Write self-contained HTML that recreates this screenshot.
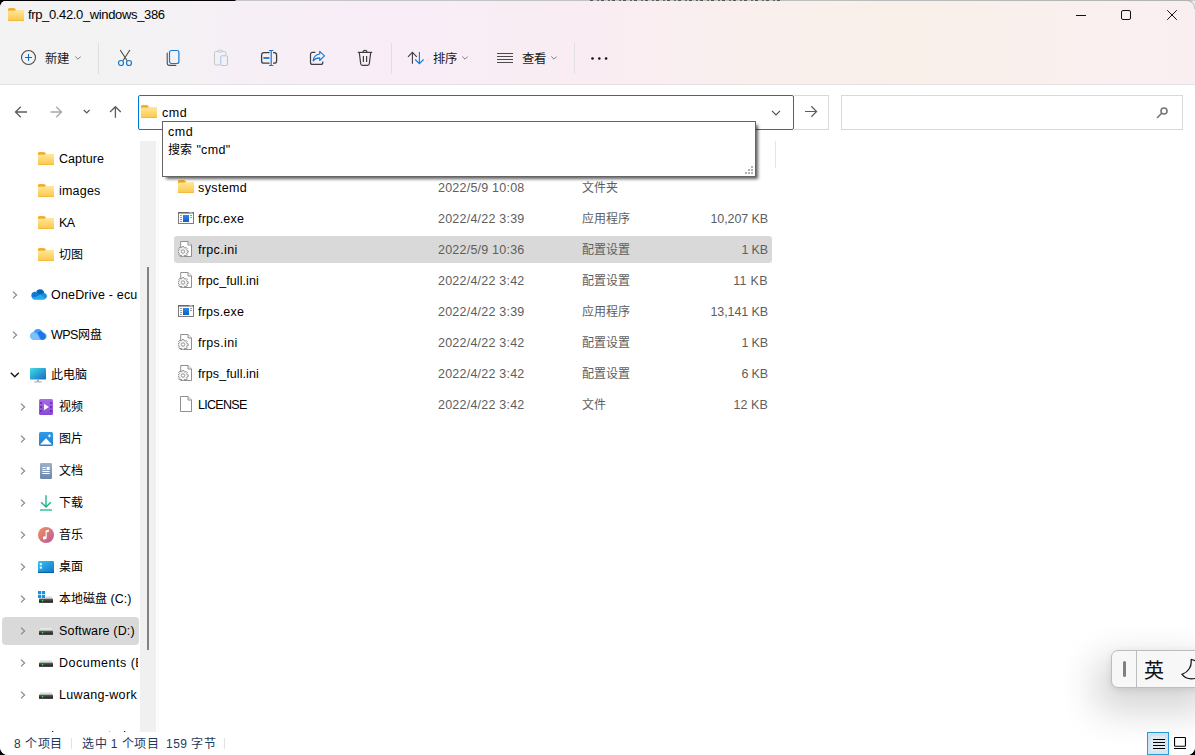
<!DOCTYPE html>
<html lang="zh-CN">
<head>
<meta charset="utf-8">
<title>frp_0.42.0_windows_386</title>
<style>
html,body{margin:0;padding:0;}
body{width:1195px;height:755px;overflow:hidden;background:#000;position:relative;
  font-family:"Liberation Sans",sans-serif;font-size:12.5px;color:#000;}
.abs,.t,svg{position:absolute;}
.t{white-space:nowrap;line-height:16px;height:16px;}
svg{overflow:visible;}
#topline{z-index:5;left:0;top:0;width:1195px;height:1px;background:linear-gradient(90deg,#000 0,#000 235px,#c6c6c6 236px,#bdbdbd 840px,#b2b2b2 1188px,#d8d8d8 1195px);}
#win{left:0;top:0;width:1195px;height:755px;background:#fff;border-radius:8px 8px 8px 8px;overflow:hidden;}
#chrome{left:0;top:0;width:1195px;height:84px;border-bottom:1px solid #e3e1e4;
  background:linear-gradient(90deg,#f3f3f3 0,#f4f2f4 150px,#f7eef6 300px,#f9edf6 450px,#f9edf3 600px,#f9efed 750px,#f9f0ea 900px,#f9f0ee 1050px,#f9eff2 1195px);}
.vsep{width:1px;background:#e2dfe3;}
#title{left:28px;top:7px;font-size:13px;letter-spacing:-.36px;}
.tb{font-size:12.400px;top:51px;color:#1a1a1a;margin-left:.5px;}
#addr{left:138px;top:95px;width:654px;height:33px;border:1px solid #0078d4;border-radius:2px;background:#fff;}
#go{left:794px;top:95px;width:34px;height:33px;border:1px solid #d9d9d9;border-left:none;background:#fff;}
#search{left:841px;top:95px;width:340px;height:33px;border:1px solid #d9d9d9;background:#fff;}
#drop{left:162px;top:121px;width:592px;height:54px;border:1px solid #646464;background:#fff;
  box-shadow:3px 3px 3px -1px rgba(0,0,0,.62);}
#track{left:140px;top:141px;width:16px;height:591px;background:#f0f0f0;}
#thumb{left:147px;top:267px;width:2px;height:383px;background:#828282;}
.sel{background:#d9d9d9;border-radius:3px;}
.nm{left:198px;color:#000;}
.dt{left:438px;color:#5e5e5e;}
.ty{left:582px;color:#5e5e5e;font-size:12px;}
.sz{right:427px;color:#5e5e5e;text-align:right;}
.sb{left:59px;color:#000;}
.sb2{left:51px;color:#000;}
.cj{font-size:12px;}
.st{top:736px;color:#1e395b;font-size:12px;letter-spacing:.5px;}
</style>
</head>
<body>
<svg width="0" height="0" style="position:absolute;left:-10px;top:-10px">
  <defs>
    <linearGradient id="fg" x1="0" y1="0" x2="0" y2="1"><stop offset="0" stop-color="#ffe79d"/><stop offset="1" stop-color="#fac846"/></linearGradient>
    <linearGradient id="pcg" x1="0" y1="0" x2="1" y2="1"><stop offset="0" stop-color="#3fdde6"/><stop offset="1" stop-color="#1769c4"/></linearGradient>
    <linearGradient id="vidg" x1="0" y1="0" x2="0" y2="1"><stop offset="0" stop-color="#a86bea"/><stop offset="1" stop-color="#8a47d6"/></linearGradient>
    <linearGradient id="picg" x1="0" y1="0" x2="0" y2="1"><stop offset="0" stop-color="#2f9be8"/><stop offset="1" stop-color="#1f7fd6"/></linearGradient>
    <linearGradient id="docg" x1="0" y1="0" x2="0" y2="1"><stop offset="0" stop-color="#9db0cb"/><stop offset="1" stop-color="#6d86ab"/></linearGradient>
    <linearGradient id="musg" x1="0" y1="0" x2="1" y2="1"><stop offset="0" stop-color="#f5925a"/><stop offset="1" stop-color="#b8579f"/></linearGradient>
    <linearGradient id="dskg" x1="0" y1="0" x2="1" y2="1"><stop offset="0" stop-color="#35c6f2"/><stop offset="1" stop-color="#1274c6"/></linearGradient>
    <linearGradient id="drtg" x1="0" y1="0" x2="0" y2="1"><stop offset="0" stop-color="#f0f0f0"/><stop offset="1" stop-color="#c9c9c9"/></linearGradient>
    <linearGradient id="drvg" x1="0" y1="0" x2="0" y2="1"><stop offset="0" stop-color="#5e5e5e"/><stop offset=".7" stop-color="#2b2b2b"/><stop offset="1" stop-color="#555"/></linearGradient>
    <linearGradient id="exeg" x1="0" y1="0" x2="0" y2="1"><stop offset="0" stop-color="#2a8be6"/><stop offset="1" stop-color="#0d5fc2"/></linearGradient>
    <symbol id="folder" viewBox="0 0 16 13">
      <path d="M0 1.6C0 .7.7 0 1.6 0h4.1c.5 0 .9.2 1.2.5L8.3 2h6.2c.8 0 1.5.7 1.5 1.5v8c0 .8-.7 1.5-1.5 1.5h-13C.7 13 0 12.300 0 11.500z" fill="#f2ae2c"/>
      <path d="M0 4.100C0 3.100.600 2.800 1.300 2.800l4.800-.1c.5 0 .8-.1 1.200-.400L7.800 2h6.900c.7 0 1.300.600 1.300 1.300v8.200c0 .8-.7 1.500-1.500 1.500h-13C.7 13 0 12.300 0 11.500z" fill="url(#fg)"/>
      <path d="M0 11.500c0 .8.700 1.500 1.500 1.500h13c.8 0 1.500-.7 1.500-1.500v-.6c0 .8-.7 1.500-1.500 1.500h-13c-.8 0-1.500-.7-1.500-1.500z" fill="#eaa935"/>
    </symbol>
    <symbol id="chev" viewBox="0 0 6 4"><path d="M.3.500 3 3.200 5.700.5" fill="none" stroke="#7a7a7a" stroke-width="1"/></symbol>
    <symbol id="rchev" viewBox="0 0 6 8"><path d="M1 .6 4.600 4 1 7.400" fill="none" stroke="#8c8c8c" stroke-width="1.300"/></symbol>
    <symbol id="ini" viewBox="0 0 14 16">
      <path d="M2.700.500h7.300l3.500 3.500v11.500H2.700z" fill="#fff" stroke="#8f8f8f" stroke-width="1"/>
      <path d="M10 .5v3.500h3.500" fill="#f3f3f3" stroke="#8f8f8f" stroke-width="1"/>
      <g transform="translate(5 10.500)">
        <path d="M-.8-5h1.600l.3 1.200 1 .4 1.100-.7 1.100 1.100-.7 1.100.4 1 1.200.3v1.600l-1.200.3-.4 1 .7 1.100-1.100 1.100-1.100-.7-1 .4-.3 1.200H-.8l-.3-1.200-1-.4-1.100.7-1.100-1.100.7-1.100-.4-1L-5.200.800V-.8l1.200-.3.400-1-.7-1.100 1.100-1.100 1.100.7 1-.4z" fill="#f4f4f4" stroke="#8a8a8a" stroke-width=".9"/>
        <circle r="1.700" fill="#fff" stroke="#8a8a8a" stroke-width=".9"/>
      </g>
    </symbol>
    <symbol id="exe" viewBox="0 0 16 12">
      <rect x=".5" y=".5" width="15" height="11" fill="#fff" stroke="#7d7d7d" stroke-width="1"/>
      <rect x="0" y="0" width="16" height="1.600" fill="#6a6a6a"/>
      <rect x="5" y="3" width="6" height="7" fill="url(#exeg)"/>
      <path d="M2 3.500h2M2 5.500h2M2 7.500h2M2 9.500h2M12 3.500h2M12 5.500h2" stroke="#9a9a9a" stroke-width="1"/>
      <rect x="11.500" y=".3" width="1" height="1" fill="#fff"/><rect x="13.300" y=".3" width="1" height="1" fill="#fff"/>
    </symbol>
    <symbol id="drive" viewBox="0 0 14 7">
      <path d="M1.500 0h11L14 3H0z" fill="url(#drtg)"/>
      <rect x="0" y="2.800" width="14" height="4.200" rx=".5" fill="url(#drvg)"/>
      <rect x="2.900" y="4.100" width="1.300" height="1.300" fill="#3fe860"/>
    </symbol>
  </defs>
</svg>
<div class="abs" style="right:0;top:0;width:10px;height:10px;background:#ececec"></div>
<div class="abs" style="z-index:6;right:0;top:0;width:9px;height:8px;border-top:1px solid #b4b4b4;border-right:1px solid #c4c4c4;border-top-right-radius:8px"></div>
<div id="topline" class="abs"></div>
<div class="abs" style="z-index:6;left:590px;top:0;width:192px;height:1px;background:repeating-linear-gradient(90deg,#555 0,#555 3px,#c0c0c0 3px,#c0c0c0 7px,#666 7px,#666 9px,#c0c0c0 9px,#c0c0c0 11px)"></div>
<div id="win" class="abs">
  <div id="chrome" class="abs"></div>

  <!-- title -->
  <div id="title" class="t">frp_0.42.0_windows_386</div>


  <!-- title icon + window controls -->
  <svg style="left:8px;top:8px" width="16" height="13"><use href="#folder"/></svg>
  <svg style="left:1076px;top:10px" width="102" height="11" viewBox="0 0 102 11" fill="none" stroke="#111" stroke-width="1">
    <path d="M0 5.500h10"/>
    <rect x="45.500" y=".5" width="9" height="9" rx="1.500"/>
    <path d="M91.200.2l9.600 9.600M100.800.2l-9.600 9.600"/>
  </svg>

  <!-- toolbar icons -->
  <svg style="left:20px;top:49px" width="62" height="18" viewBox="0 0 62 18" fill="none">
    <circle cx="8.500" cy="8.500" r="7" stroke="#4a4a4a" stroke-width="1.100"/>
    <path d="M5 8.500h7M8.500 5v7" stroke="#0f6cbd" stroke-width="1.100"/>
  </svg>
  <svg style="left:75px;top:56px" width="6" height="4"><use href="#chev"/></svg>
  <!-- cut -->
  <svg style="left:117px;top:49px" width="17" height="18" viewBox="0 0 17 18" fill="none">
    <path d="M3.200 1l7 10.800M12.900 1l-7 10.800" stroke="#4a4a4a" stroke-width="1.100"/>
    <circle cx="4" cy="14" r="2.500" stroke="#0f7bd8" stroke-width="1.200"/>
    <circle cx="12" cy="14" r="2.500" stroke="#0f7bd8" stroke-width="1.200"/>
  </svg>
  <!-- copy -->
  <svg style="left:166px;top:49px" width="14" height="18" viewBox="0 0 14 18" fill="none">
    <path d="M1.200 3.700v10.200c0 1.400 1.100 2.500 2.500 2.500h6.600" stroke="#4a4a4a" stroke-width="1.100"/>
    <rect x="3.500" y="1.500" width="9.400" height="13" rx="2" stroke="#0f7bd8" stroke-width="1.200"/>
  </svg>
  <!-- paste (disabled) -->
  <svg style="left:213px;top:49px" width="16" height="18" viewBox="0 0 16 18" fill="none">
    <path d="M7 16H2.700c-.7 0-1.200-.5-1.200-1.200V3.700c0-.7.5-1.200 1.200-1.200h9c.7 0 1.200.5 1.200 1.200V6" stroke="#c6c6c6" stroke-width="1"/>
    <ellipse cx="7.200" cy="2.200" rx="2.600" ry="1.100" stroke="#c6c6c6" stroke-width="1" fill="#f6eff6"/>
    <rect x="7.700" y="6.700" width="6.800" height="9.800" rx="1.500" stroke="#a2cbf0" stroke-width="1.100"/>
  </svg>
  <!-- rename -->
  <svg style="left:260px;top:49px" width="18" height="18" viewBox="0 0 18 18" fill="none">
    <path d="M9.600 3.600H3.900c-1.300 0-2.300 1-2.300 2.300v6c0 1.300 1 2.300 2.300 2.300h5.700M13 3.600h1.300c1.300 0 2.300 1 2.300 2.300v6c0 1.300-1 2.300-2.300 2.300H13" stroke="#3f3f3f" stroke-width="1.300"/>
    <path d="M3.400 9h6" stroke="#0f6cd0" stroke-width="1.700"/>
    <path d="M9 1.500h4.400M9 16.500h4.400M11.200 1.500v15" stroke="#0f7bd8" stroke-width="1.200"/>
  </svg>
  <!-- share -->
  <svg style="left:309px;top:50px" width="17" height="16" viewBox="0 0 17 16" fill="none">
    <path d="M6.400 2.400H3.500c-1.100 0-2 .9-2 2v8c0 1.100.9 2 2 2h8.300c1.100 0 2-.9 2-2v-1" stroke="#3f3f3f" stroke-width="1.200"/>
    <path d="M10.700 1.300l4.800 4.600-4.800 4.600V7.900c-3 0-5 .9-6.600 2.900.5-3.900 2.900-6.300 6.600-6.800z" stroke="#0f7bd8" stroke-width="1.100" stroke-linejoin="round"/>
  </svg>
  <!-- delete -->
  <svg style="left:357px;top:49px" width="16" height="18" viewBox="0 0 16 18" fill="none" stroke="#3f3f3f" stroke-width="1.200">
    <path d="M.8 3.400h14.400"/>
    <path d="M6 3.200c0-1.100.9-1.900 2-1.900s2 .8 2 1.900"/>
    <path d="M2.300 3.600l1.400 11.200c.1.900.8 1.600 1.700 1.600h5.200c.9 0 1.600-.7 1.700-1.600l1.400-11.200"/>
    <path d="M6.400 7v6M9.600 7v6"/>
  </svg>
  <!-- sort -->
  <svg style="left:407px;top:51px" width="18" height="14" viewBox="0 0 18 14" fill="none">
    <path d="M5.400 12.800V1.500M1 5.800l4.400-4.400 4.400 4.400" stroke="#3f3f3f" stroke-width="1.100"/>
    <path d="M12.400 1v11.500M8.200 8.500l4.200 4.200 4.200-4.200" stroke="#0f7bd8" stroke-width="1.100"/>
  </svg>
  <svg style="left:462px;top:56px" width="6" height="4"><use href="#chev"/></svg>
  <!-- view -->
  <svg style="left:497px;top:53px" width="16" height="10" viewBox="0 0 16 10" fill="none" stroke="#4a4a4a" stroke-width="1">
    <path d="M0 .5h16M0 3.500h16M0 6.500h16M0 9.500h16"/>
  </svg>
  <svg style="left:551px;top:56px" width="6" height="4"><use href="#chev"/></svg>
  <!-- more -->
  <svg style="left:591px;top:57px" width="17" height="3" viewBox="0 0 17 3" fill="#111"><circle cx="1.500" cy="1.500" r="1.300"/><circle cx="8.300" cy="1.500" r="1.300"/><circle cx="15.100" cy="1.500" r="1.300"/></svg>

  <!-- nav arrows -->
  <svg style="left:14px;top:106px" width="110" height="13" viewBox="0 0 110 13" fill="none" stroke-width="1.300">
    <path d="M13 6h-11.500M6.800.8l-5.300 5.200 5.300 5.200" stroke="#5c5c5c"/>
    <path d="M36.500 6h11.500M42.200.8l5.300 5.200-5.300 5.200" stroke="#a8a8a8"/>
    <path d="M69.800 4l2.900 2.900 2.900-2.900" stroke="#5c5c5c"/>
    <path d="M101.400 11.800V.9M96 6l5.400-5.300 5.400 5.300" stroke="#5c5c5c"/>
  </svg>

  <!-- toolbar separators -->
  <div class="abs vsep" style="left:98px;top:43px;height:31px"></div>
  <div class="abs vsep" style="left:391px;top:43px;height:31px"></div>
  <div class="abs vsep" style="left:574px;top:43px;height:31px"></div>

  <!-- toolbar labels -->
  <div class="t tb" style="left:44px">新建</div>
  <div class="t tb" style="left:432px">排序</div>
  <div class="t tb" style="left:521px">查看</div>

  <!-- address row -->
  <div id="addr" class="abs"></div>
  <div id="go" class="abs"></div>
  <div id="search" class="abs"></div>
  <svg style="left:141px;top:105px" width="16" height="13"><use href="#folder"/></svg>
  <svg style="left:771px;top:110px" width="10" height="6" viewBox="0 0 10 6" fill="none" stroke="#4a4a4a" stroke-width="1.100"><path d="M1 .9l4 4 4-4"/></svg>
  <svg style="left:805px;top:106px" width="13" height="12" viewBox="0 0 13 12" fill="none" stroke="#5c5c5c" stroke-width="1.200"><path d="M0 5.500h11.500M6.300.3l5.300 5.200-5.300 5.200"/></svg>
  <svg style="left:1156px;top:107px" width="13" height="12" viewBox="0 0 13 12" fill="none" stroke="#757575" stroke-width="1.600"><circle cx="8" cy="4" r="3"/><path d="M5.700 6.300L1 11"/></svg>
  <div class="t" style="left:162px;top:105px;letter-spacing:.5px">cmd</div>

  <!-- sidebar scroll track -->
  <div id="track" class="abs"></div>
  <div id="thumb" class="abs"></div>
  <div class="abs" style="left:157px;top:141px;width:2px;height:591px;background:#fafafa"></div>

  <!-- column header separator -->
  <div class="abs" style="left:775px;top:141px;width:1px;height:27px;background:#e5e5e5"></div>

  <!-- selection highlights -->
  <div class="abs sel" style="left:174px;top:236px;width:598px;height:27px"></div>
  <div class="abs sel" style="left:2px;top:617px;width:137px;height:28px;border-radius:4px"></div>

  <!-- file icons -->
  <svg style="left:178px;top:180px" width="16" height="13"><use href="#folder"/></svg>
  <svg style="left:178px;top:212px" width="16" height="12"><use href="#exe"/></svg>
  <svg style="left:178px;top:241px" width="14" height="16"><use href="#ini"/></svg>
  <svg style="left:178px;top:272px" width="14" height="16"><use href="#ini"/></svg>
  <svg style="left:178px;top:305px" width="16" height="12"><use href="#exe"/></svg>
  <svg style="left:178px;top:334px" width="14" height="16"><use href="#ini"/></svg>
  <svg style="left:178px;top:365px" width="14" height="16"><use href="#ini"/></svg>
  <svg style="left:180px;top:396px" width="12" height="16" viewBox="0 0 12 16"><path d="M.5.500h7.500l3.500 3.500v11.500H.5z" fill="#fff" stroke="#8f8f8f"/><path d="M8 .5v3.500h3.500" fill="#f3f3f3" stroke="#8f8f8f"/></svg>
  <!-- file list -->
  <div class="t nm" style="top:180px;letter-spacing:0.38px">systemd</div>
  <div class="t dt" style="top:180px;letter-spacing:0.22px">2022/5/9 10:08</div>
  <div class="t ty" style="top:180px">文件夹</div>
  <div class="t nm" style="top:211px;letter-spacing:0.2px">frpc.exe</div>
  <div class="t dt" style="top:211px;letter-spacing:0.22px">2022/4/22 3:39</div>
  <div class="t ty" style="top:211px">应用程序</div>
  <div class="t sz" style="top:211px;letter-spacing:-0.1px">10,207 KB</div>
  <div class="t nm" style="top:242px;letter-spacing:0.34px">frpc.ini</div>
  <div class="t dt" style="top:242px;letter-spacing:0.22px">2022/5/9 10:36</div>
  <div class="t ty" style="top:242px">配置设置</div>
  <div class="t sz" style="top:242px;letter-spacing:-0.13px">1 KB</div>
  <div class="t nm" style="top:273px;letter-spacing:0.08px">frpc_full.ini</div>
  <div class="t dt" style="top:273px;letter-spacing:0.22px">2022/4/22 3:42</div>
  <div class="t ty" style="top:273px">配置设置</div>
  <div class="t sz" style="top:273px;letter-spacing:0.35px">11 KB</div>
  <div class="t nm" style="top:304px;letter-spacing:0.2px">frps.exe</div>
  <div class="t dt" style="top:304px;letter-spacing:0.22px">2022/4/22 3:39</div>
  <div class="t ty" style="top:304px">应用程序</div>
  <div class="t sz" style="top:304px;letter-spacing:-0.1px">13,141 KB</div>
  <div class="t nm" style="top:335px;letter-spacing:0.34px">frps.ini</div>
  <div class="t dt" style="top:335px;letter-spacing:0.22px">2022/4/22 3:42</div>
  <div class="t ty" style="top:335px">配置设置</div>
  <div class="t sz" style="top:335px;letter-spacing:-0.13px">1 KB</div>
  <div class="t nm" style="top:366px;letter-spacing:0.08px">frps_full.ini</div>
  <div class="t dt" style="top:366px;letter-spacing:0.22px">2022/4/22 3:42</div>
  <div class="t ty" style="top:366px">配置设置</div>
  <div class="t sz" style="top:366px;letter-spacing:-0.13px">6 KB</div>
  <div class="t nm" style="top:397px;letter-spacing:-0.7px">LICENSE</div>
  <div class="t dt" style="top:397px;letter-spacing:0.22px">2022/4/22 3:42</div>
  <div class="t ty" style="top:397px">文件</div>
  <div class="t sz" style="top:397px;letter-spacing:0.1px">12 KB</div>
  <!-- sidebar -->
  <div class="abs" style="left:0;top:140px;width:138px;height:592px;overflow:hidden">
    <svg style="left:38px;top:12px" width="16" height="13"><use href="#folder"/></svg>
    <svg style="left:38px;top:44px" width="16" height="13"><use href="#folder"/></svg>
    <svg style="left:38px;top:76px" width="16" height="13"><use href="#folder"/></svg>
    <svg style="left:38px;top:108px" width="16" height="13"><use href="#folder"/></svg>
    <svg style="left:12px;top:151px" width="6" height="8"><use href="#rchev"/></svg>
    <svg style="left:12px;top:191px" width="6" height="8"><use href="#rchev"/></svg>
    <svg style="left:20px;top:263px" width="6" height="8"><use href="#rchev"/></svg>
    <svg style="left:20px;top:295px" width="6" height="8"><use href="#rchev"/></svg>
    <svg style="left:20px;top:327px" width="6" height="8"><use href="#rchev"/></svg>
    <svg style="left:20px;top:359px" width="6" height="8"><use href="#rchev"/></svg>
    <svg style="left:20px;top:391px" width="6" height="8"><use href="#rchev"/></svg>
    <svg style="left:20px;top:423px" width="6" height="8"><use href="#rchev"/></svg>
    <svg style="left:20px;top:455px" width="6" height="8"><use href="#rchev"/></svg>
    <svg style="left:20px;top:487px" width="6" height="8"><use href="#rchev"/></svg>
    <svg style="left:20px;top:519px" width="6" height="8"><use href="#rchev"/></svg>
    <svg style="left:20px;top:551px" width="6" height="8"><use href="#rchev"/></svg>
    <svg style="left:12px;top:592px" width="6" height="8"><use href="#rchev"/></svg>
    <svg style="left:10px;top:232px" width="10" height="6" viewBox="0 0 10 6" fill="none" stroke="#1a1a1a" stroke-width="1.500"><path d="M.8.800l4 4 4-4"/></svg>
    <svg style="left:29.500px;top:149px" width="17" height="11" viewBox="0 0 17 11">
      <path d="M6.300 2.300c.9-1.400 2.300-2.200 3.900-2.100 1.900.1 3.300 1.200 4 3 .3.800-1 1.800-1 1.800L7 7.800z" fill="#0364b8"/>
      <path d="M1.400 7.200C1 5.400 2 3.500 3.900 3c1-.3 2-.2 2.900.4l4.500 2.700-6 4.400c-2 0-3.400-1.400-3.900-3.300z" fill="#0f78d4"/>
      <path d="M10.400 5.600l2.800-1.500c1.900-.3 3.500 1 3.700 2.700.1 1.100-.4 2.100-1.200 2.700l-5.400-.5z" fill="#1490df"/>
      <path d="M1.700 8.300c.6 1.500 2 2.400 3.600 2.400h8.200c1 0 1.800-.4 2.400-1.100l-5.500-4-4.900 2.500z" fill="#28a8ea"/>
    </svg>
    <svg style="left:30px;top:189px" width="17" height="11" viewBox="0 0 17 11">
      <path d="M4.400 10.800c-2.400 0-4.200-1.700-4.200-3.900 0-2 1.500-3.600 3.400-3.800C4.300 1.300 6 .1 8 .1c2.200 0 4 1.400 4.700 3.300 2.200.1 3.900 1.700 3.900 3.700 0 2.100-1.700 3.700-3.900 3.700z" fill="#3d9af5"/>
      <path d="M1.200 10c-.7-.8-1-1.800-1-2.900 0-1.900 1.400-3.500 3.300-3.800 1.900-.2 3.600.9 4.500 2.800L10.300 10.800H4.400c-1.300 0-2.400-.3-3.200-.8z" fill="#7fc0fb"/>
      <path d="M7.600 3.700c1.200-1.200 3.100-1.400 4.700-.6 1.500.8 2.600 2.500 3.200 5.100-.3 1.500-1.500 2.600-3.100 2.600h-1.200z" fill="#1c74e8"/>
    </svg>
    <svg style="left:30px;top:228px" width="16" height="15" viewBox="0 0 16 15">
      <rect x="0" y="0" width="16" height="11.600" rx="1.200" fill="url(#pcg)"/>
      <rect x="7.200" y="11.600" width="1.600" height="2" fill="#8b9bab"/><rect x="4.200" y="13.400" width="7.600" height="1" fill="#9aa8b6"/>
    </svg>
    <svg style="left:39px;top:259px" width="14" height="16" viewBox="0 0 14 16">
      <rect width="14" height="16" rx="1.500" fill="url(#vidg)"/>
      <path d="M5 4.700l5 3.300-5 3.300z" fill="#fff"/>
      <g fill="#5b2aa0"><rect x="1.200" y="3" width="1.700" height="1.700"/><rect x="1.200" y="7.100" width="1.700" height="1.700"/><rect x="1.200" y="11.200" width="1.700" height="1.700"/><rect x="11.100" y="3" width="1.700" height="1.700"/><rect x="11.100" y="7.100" width="1.700" height="1.700"/><rect x="11.100" y="11.200" width="1.700" height="1.700"/></g>
    </svg>
    <svg style="left:39px;top:292px" width="14" height="14" viewBox="0 0 14 14">
      <rect width="14" height="14" rx="1.500" fill="url(#picg)"/>
      <path d="M1 12.500l6-6.300 6 6.300z" fill="#fff"/>
      <path d="M10.400 2.400v3M8.900 3.900h3" stroke="#fff" stroke-width="1"/>
    </svg>
    <svg style="left:40px;top:323px" width="12" height="16" viewBox="0 0 12 16">
      <rect width="12" height="16" rx="1.200" fill="url(#docg)"/>
      <path d="M2.400 4.500h3.200M2.400 6.500h3.200M2.400 8.500h7.200M2.400 10.500h7.200" stroke="#fff" stroke-width="1"/><rect x="6.600" y="3.800" width="3" height="3.200" fill="#fff"/>
    </svg>
    <svg style="left:40px;top:355px" width="12" height="16" viewBox="0 0 12 16" fill="none" stroke="#1db58a" stroke-width="1.400">
      <path d="M6 .2v11.500M1.200 7.200l4.800 4.800 4.800-4.800"/><path d="M0 15h12" stroke-width="1.300"/>
    </svg>
    <svg style="left:38px;top:387px" width="16" height="16" viewBox="0 0 16 16">
      <circle cx="8" cy="8" r="8" fill="url(#musg)"/>
      <path d="M7.600 3.500l3.300-.9v2.100l-2.200.6v5.300c0 1.200-.9 2-2 2s-1.800-.7-1.800-1.600c0-1 .8-1.700 1.800-1.700.3 0 .6.100.9.200z" fill="#fff"/>
    </svg>
    <svg style="left:38px;top:421px" width="16" height="12" viewBox="0 0 16 12">
      <rect width="16" height="12" rx="1.200" fill="url(#dskg)"/>
      <rect y="10.800" width="16" height="1.200" fill="#0d5ea8"/>
      <rect x="1.800" y="2.200" width="2" height="2" fill="#fff"/><rect x="1.800" y="5.600" width="2" height="2" fill="#fff"/>
    </svg>
    <svg style="left:38px;top:451px" width="16" height="12" viewBox="0 0 16 12">
      <g fill="#1a8fe3"><rect x="0" y="0" width="3.200" height="3.200"/><rect x="3.900" y="0" width="3.200" height="3.200"/><rect x="0" y="3.900" width="3.200" height="3.200"/><rect x="3.900" y="3.900" width="3.200" height="3.200"/></g>
      <path d="M7.300 5h6.200L15 8H1l.3-.7h6z" fill="url(#drtg)"/>
      <rect x="1" y="7.800" width="14" height="4.200" rx=".5" fill="url(#drvg)"/><rect x="3.900" y="9.100" width="1.300" height="1.300" fill="#3fe860"/>
    </svg>
    <svg style="left:39px;top:488px" width="14" height="7"><use href="#drive"/></svg>
    <svg style="left:39px;top:520px" width="14" height="7"><use href="#drive"/></svg>
    <svg style="left:39px;top:552px" width="14" height="7"><use href="#drive"/></svg>
    <svg style="left:31px;top:593px" width="14" height="7"><use href="#drive"/></svg>
    <div class="t sb" style="top:11px;letter-spacing:0.07px">Capture</div>
    <div class="t sb" style="top:43px;letter-spacing:0.2px">images</div>
    <div class="t sb" style="top:75px;letter-spacing:-0.6px">KA</div>
    <div class="t sb cj" style="top:107px">切图</div>
    <div class="t sb2" style="top:147px;letter-spacing:0.17px">OneDrive - ecust</div>
    <div class="t sb2" style="top:187px"><span style="letter-spacing:-.6px">WPS</span><span class="cj">网盘</span></div>
    <div class="t sb2 cj" style="top:227px">此电脑</div>
    <div class="t sb cj" style="top:259px">视频</div>
    <div class="t sb cj" style="top:291px">图片</div>
    <div class="t sb cj" style="top:323px">文档</div>
    <div class="t sb cj" style="top:355px">下载</div>
    <div class="t sb cj" style="top:387px">音乐</div>
    <div class="t sb cj" style="top:419px">桌面</div>
    <div class="t sb" style="top:451px"><span class="cj">本地磁盘</span> (C:)</div>
    <div class="t sb" style="top:483px;letter-spacing:0.17px">Software (D:)</div>
    <div class="t sb" style="top:515px;letter-spacing:0.5px">Documents (E:)</div>
    <div class="t sb" style="top:547px;letter-spacing:0.33px">Luwang-work (F:)</div>
    <div class="t sb2" style="top:588px;letter-spacing:0.33px">Luwang-study (G:)</div>
  </div>

  <!-- dropdown -->
  <div id="drop" class="abs"></div>
  <div class="t" style="left:168px;top:124px;letter-spacing:.5px">cmd</div>
  <div class="t" style="left:168px;top:142px;letter-spacing:.3px"><span class="cj">搜索</span> "cmd"</div>

  <!-- dropdown resize grip -->
  <svg style="left:745px;top:166px" width="9" height="9" viewBox="0 0 9 9" fill="#b2b2b2"><rect x="6" y="0" width="2" height="2"/><rect x="3" y="3" width="2" height="2"/><rect x="6" y="3" width="2" height="2"/><rect x="0" y="6" width="2" height="2"/><rect x="3" y="6" width="2" height="2"/><rect x="6" y="6" width="2" height="2"/></svg>

  <!-- status bar -->
  <div class="abs" style="left:0;top:732px;width:1195px;height:23px;background:#fff"></div>
  <div class="t st" style="left:14px">8 个项目</div>
  <div class="abs" style="left:71px;top:738px;width:1px;height:11px;background:#e3e3e3"></div>
  <div class="t st" style="left:82px">选中 1 个项目</div>
  <div class="t st" style="left:166px">159 字节</div>
  <div class="abs" style="left:224px;top:738px;width:1px;height:11px;background:#e3e3e3"></div>
  <div class="abs" style="left:1147px;top:732px;width:20px;height:21px;border:1px solid #2b9ad8;background:#cfe6f3"></div>
  <div class="abs" style="left:1151px;top:736px;width:14px;height:15px;background:#e3ecf0"></div>
  <svg style="left:1153px;top:739px" width="12" height="10" viewBox="0 0 12 10" stroke="#000" stroke-width="1"><path d="M0 .5h12M0 3.500h12M0 6.500h12M0 9.500h12"/></svg>
  <svg style="left:1174px;top:737px" width="12" height="12" viewBox="0 0 12 12" fill="none" stroke="#000" stroke-width="1.100"><rect x=".55" y=".55" width="10.900" height="8.700" rx=".6"/><path d="M0 11.500h12" stroke-width="1"/></svg>

  <!-- IME floating bar -->
  <div class="abs" style="left:1111px;top:650px;width:100px;height:36px;border:1px solid #bdbdbd;border-radius:7px;background:#f7f7f7;box-shadow:-8px 16px 36px 8px rgba(0,0,0,.16), 0 2px 6px rgba(0,0,0,.10)"></div>
  <div class="abs" style="left:1136px;top:651px;width:1px;height:36px;background:#bcbcbc"></div>
  <div class="abs" style="left:1123px;top:661px;width:3px;height:16px;border-radius:1.500px;background:#808080"></div>
  <div class="t" style="left:1144px;top:659px;font-size:20px;line-height:24px;height:24px;color:#111;font-weight:300">英</div>
  <svg style="left:1180px;top:657px" width="16" height="24" viewBox="1180 657 16 24" fill="none" stroke="#111" stroke-width="1.200"><path d="M1191 659.300C1192.200 666 1188.500 672 1182 674.400c2.800 3.600 8 5.200 14 3.900M1191 659.300l5.500 1.900"/></svg>
</div>
</body>
</html>
